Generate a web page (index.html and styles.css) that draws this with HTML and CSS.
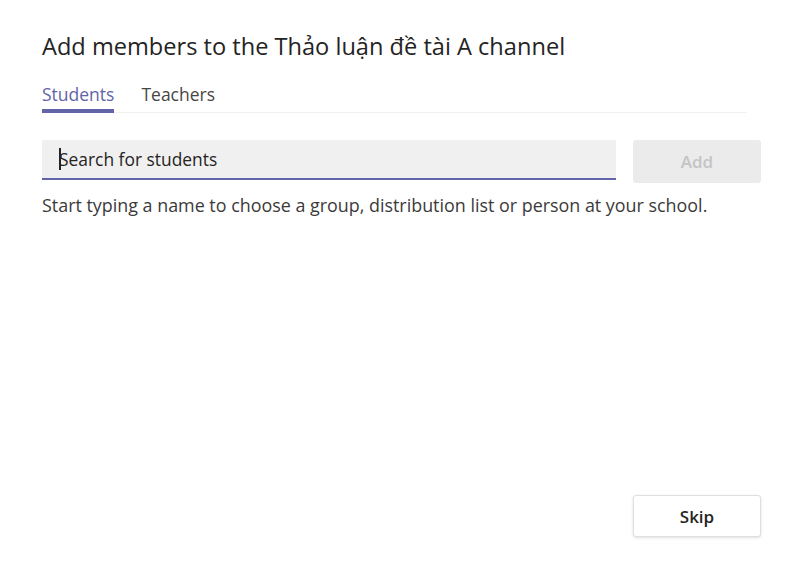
FILE: index.html
```html
<!DOCTYPE html>
<html lang="vi">
<head>
<meta charset="utf-8">
<title>Add members</title>
<link rel="stylesheet" href="styles.css">
</head>
<body>
<div class="dialog">
  <h1 class="title">Add members to the Thảo luận đề tài A channel</h1>
  <div class="tabs">
    <span class="tab active">Students</span>
    <span class="tab">Teachers</span>
  </div>
  <div class="search-row">
    <div class="input"><span class="caret"></span><span class="placeholder">Search for students</span></div>
    <button class="btn btn-add" disabled>Add</button>
  </div>
  <p class="hint">Start typing a name to choose a group, distribution list or person at your school.</p>
  <div class="spacer"></div>
  <div class="footer">
    <button class="btn btn-skip">Skip</button>
  </div>
</div>
</body>
</html>
```

FILE: styles.css
```css
html, body {
  margin: 0;
  padding: 0;
  background: #ffffff;
}
body {
  font-family: "Open Sans", "Noto Sans", sans-serif;
  color: #252423;
}
.dialog {
  width: 800px;
  height: 572px;
  box-sizing: border-box;
  padding: 30px 39px 35px 42px;
  display: flex;
  flex-direction: column;
}
.title {
  margin: 0;
  font-size: 23.6px;
  font-weight: 400;
  line-height: 32px;
  color: #252423;
  letter-spacing: 0;
}
.tabs {
  margin-top: 20px;
  margin-right: 14px;
  display: flex;
  gap: 27px;
  border-bottom: 1px solid #f3f2f1;
}
.tab {
  font-size: 17.5px;
  line-height: 24px;
  padding-bottom: 3px;
  color: #484644;
  border-bottom: 4px solid transparent;
  margin-bottom: -1px;
}
.tab.active {
  color: #6264a7;
  border-bottom-color: #6264a7;
}
.search-row {
  margin-top: 27px;
  display: flex;
  gap: 17px;
}
.input {
  flex: 1;
  height: 38px;
  background: #f0f0f0;
  border-bottom: 2px solid #6264a7;
  display: flex;
  align-items: center;
  padding-left: 17px;
  font-size: 17.4px;
  color: #252423;
}
.caret {
  width: 1.5px;
  height: 22px;
  background: #252423;
  margin-right: -1.5px;
}
.btn {
  font-family: inherit;
  font-size: 17px;
  font-weight: 600;
  width: 128px;
  height: 43px;
  border-radius: 3px;
  cursor: pointer;
}
.btn-add {
  border: none;
  background: #ebebeb;
  color: #c4c4c4;
}
.hint {
  margin: 10px 0 0;
  font-size: 17.9px;
  line-height: 24px;
  color: #3b3a39;
}
.spacer {
  flex: 1;
}
.footer {
  display: flex;
  justify-content: flex-end;
}
.btn-skip {
  height: 42px;
  background: #ffffff;
  color: #252423;
  border: 1px solid #e1dfdd;
  box-shadow: 0 1px 3px rgba(0,0,0,0.12);
}
```
